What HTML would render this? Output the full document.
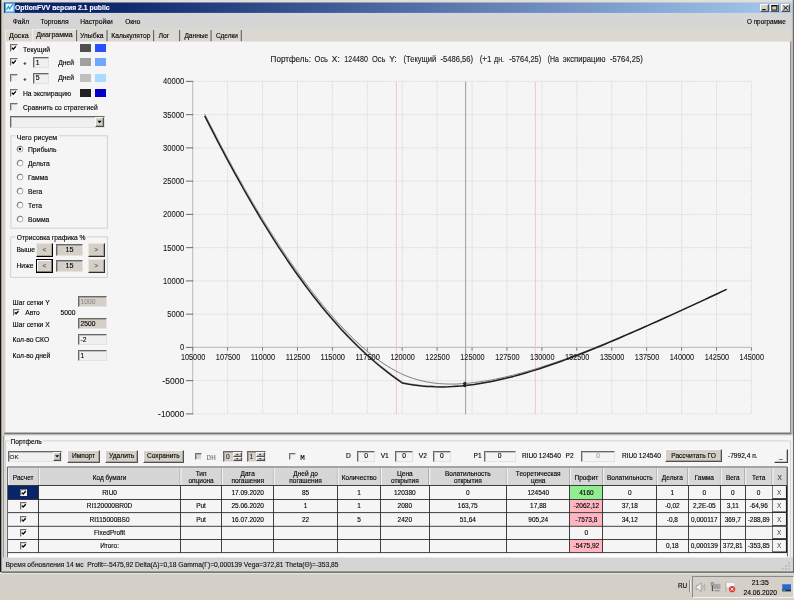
<!DOCTYPE html>
<html><head><meta charset="utf-8"><title>OptionFVV</title>
<style>
html,body{margin:0;padding:0;background:#d4d0c8;}
body{width:794px;height:600px;overflow:hidden;position:relative;font-family:"Liberation Sans",sans-serif;}
#w{position:absolute;left:0;top:0;width:794px;height:600px;will-change:transform;}
#w div,#w svg{position:absolute;box-sizing:border-box;}
.t{white-space:pre;-webkit-text-stroke:0.12px currentColor;}
.btn{background:#d4d0c8;border:1px solid;border-color:#fafafa #505050 #505050 #fafafa;box-shadow:inset -1px -1px 0 rgba(0,0,0,0.2);}
.sunk{border:1px solid;border-color:#686868 #e4e2dd #e4e2dd #686868;box-shadow:inset 1px 1px 0 rgba(0,0,0,0.2);}
.cb{background:#fff;border:1px solid;border-color:#707070 #f4f4f4 #f4f4f4 #707070;box-shadow:inset 1px 1px 0 rgba(0,0,0,0.18);}
.gb{border:1px solid #d0d0d0;}
</style></head><body><div id="w">
<svg style="left:0;top:0" width="794" height="600" viewBox="0 0 794 600"><defs><linearGradient id="tg" x1="0" x2="1" y1="0" y2="0"><stop offset="0" stop-color="#0a246a"/><stop offset="0.12" stop-color="#0a246a"/><stop offset="1" stop-color="#a6caf0"/></linearGradient></defs><rect x="0" y="0" width="794" height="600" fill="#d4d0c8"/><rect x="0" y="0" width="794" height="2.8" fill="#e2dfd9"/><rect x="0" y="0" width="1.3" height="572" fill="#141414"/><rect x="792.8" y="0" width="1.2" height="572.4" fill="#6a6a6a"/><rect x="3.9" y="2.5" width="787.6" height="10.5" fill="url(#tg)"/></svg>
<svg style="left:4px;top:2px" width="12" height="12" viewBox="0 0 12 12"><rect x="0.9" y="0.9" width="9.6" height="9.6" fill="#e6f4ff"/><rect x="1.4" y="1.4" width="8.6" height="8.6" fill="none" stroke="#3aa6f0" stroke-width="1.1"/><path d="M2.4 7.8 L4.4 4.6 L5.6 6.8 L8.8 2.4" stroke="#2b8ee0" stroke-width="1.2" fill="none"/></svg>
<div class="t" style="left:15.4px;top:3.9px;font-size:6.83px;line-height:10px;color:#fff;font-weight:bold;transform:translateY(-0.6px) rotate(0.01deg);">OptionFVV версия 2.1 public</div>
<div class="btn" style="left:760.2px;top:4px;width:9.2px;height:7.8px;"></div>
<div class="btn" style="left:769.6px;top:4px;width:9.2px;height:7.8px;"></div>
<div class="btn" style="left:781px;top:4px;width:9.2px;height:7.8px;"></div>
<svg style="left:760px;top:4px" width="31" height="8" viewBox="0 0 31 8"><rect x="2.2" y="5" width="3.4" height="1.1" fill="#000"/><rect x="11.8" y="1.6" width="5" height="4.4" fill="none" stroke="#000" stroke-width="0.8"/><rect x="11.4" y="1.2" width="5.8" height="1.2" fill="#000"/><path d="M23.4 1.8 L27.8 6 M27.8 1.8 L23.4 6" stroke="#000" stroke-width="1"/></svg>
<svg style="left:0;top:0" width="794" height="600" viewBox="0 0 794 600"><rect x="4.2" y="12.9" width="787.3" height="16.1" fill="#d6d6d6"/><rect x="4.2" y="29" width="787.3" height="12.6" fill="#dbd8d2"/><rect x="32.1" y="29" width="44.3" height="12.6" fill="#dedbd6"/><rect x="32.1" y="29" width="44.3" height="0.8" fill="#f2f0ec"/><rect x="32.1" y="29" width="0.8" height="12.6" fill="#f2f0ec"/><rect x="76.2" y="30" width="0.9" height="11.4" fill="#484848"/><rect x="106.6" y="30" width="0.9" height="11.4" fill="#484848"/><rect x="153.2" y="30" width="0.9" height="11.4" fill="#484848"/><rect x="179.2" y="30" width="0.9" height="11.4" fill="#484848"/><rect x="210.6" y="30" width="0.9" height="11.4" fill="#484848"/><rect x="240.8" y="30" width="0.9" height="11.4" fill="#484848"/><rect x="5.3" y="30.2" width="0.8" height="11.3" fill="#f2f0ec"/><rect x="5.3" y="30.2" width="26.5" height="0.8" fill="#ece9e4"/></svg>
<div class="t" style="left:12.8px;top:16.9px;font-size:6.67px;line-height:10px;color:#000;">Файл</div>
<div class="t" style="left:40.4px;top:16.9px;font-size:6.75px;line-height:10px;color:#000;">Торговля</div>
<div class="t" style="left:80.2px;top:16.9px;font-size:6.67px;line-height:10px;color:#000;">Настройки</div>
<div class="t" style="left:125.2px;top:16.9px;font-size:6.5px;line-height:10px;color:#000;">Окно</div>
<div class="t" style="left:747px;top:17px;font-size:6.34px;line-height:10px;color:#000;">О программе</div>
<div class="t" style="left:9px;top:30.9px;font-size:7.14px;line-height:10px;color:#000;">Доска</div>
<div class="t" style="left:36.3px;top:29.7px;font-size:7px;line-height:10px;color:#000;">Диаграмма</div>
<div class="t" style="left:80px;top:30.9px;font-size:6.82px;line-height:10px;color:#000;">Улыбка</div>
<div class="t" style="left:111.3px;top:30.9px;font-size:6.68px;line-height:10px;color:#000;">Калькулятор</div>
<div class="t" style="left:158.4px;top:30.9px;font-size:6.91px;line-height:10px;color:#000;">Лог</div>
<div class="t" style="left:184.4px;top:30.9px;font-size:6.62px;line-height:10px;color:#000;">Данные</div>
<div class="t" style="left:215.9px;top:30.9px;font-size:6.48px;line-height:10px;color:#000;">Сделки</div>
<svg style="left:0;top:0" width="794" height="600" viewBox="0 0 794 600"><rect x="5.4" y="41.5" width="785" height="391" fill="#f5f5f5"/><rect x="790.2" y="41.5" width="1" height="393" fill="#787878"/><rect x="4.2" y="432.5" width="787" height="2" fill="#8a8a8a"/><rect x="4.2" y="433.4" width="787" height="1.1" fill="#6e6e6e"/><rect x="4.2" y="434.5" width="788.6" height="1.2" fill="#e4e2de"/></svg>
<div class="cb" style="left:10.3px;top:44.3px;width:7.6px;height:7.6px;"></div>
<svg style="left:10.3px;top:44.3px" width="7.6" height="7.6" viewBox="0 0 8 8"><path d="M2.1 3.9 L3.5 5.4 L6.2 2.5" stroke="#000" stroke-width="1.5" fill="none"/></svg>
<div class="cb" style="left:10.3px;top:58.4px;width:7.6px;height:7.6px;"></div>
<svg style="left:10.3px;top:58.4px" width="7.6" height="7.6" viewBox="0 0 8 8"><path d="M2.1 3.9 L3.5 5.4 L6.2 2.5" stroke="#000" stroke-width="1.5" fill="none"/></svg>
<div class="cb" style="left:10.3px;top:74.3px;width:7.6px;height:7.6px;background:#f0f0f0;"></div>
<div class="cb" style="left:10.3px;top:89.2px;width:7.6px;height:7.6px;"></div>
<svg style="left:10.3px;top:89.2px" width="7.6" height="7.6" viewBox="0 0 8 8"><path d="M2.1 3.9 L3.5 5.4 L6.2 2.5" stroke="#000" stroke-width="1.5" fill="none"/></svg>
<div class="cb" style="left:10.3px;top:103.2px;width:7.6px;height:7.6px;background:#f0f0f0;"></div>
<div class="t" style="left:23px;top:44.9px;font-size:6.75px;line-height:10px;color:#000;">Текущий</div>
<div class="t" style="left:23px;top:89px;font-size:6.75px;line-height:10px;color:#000;">На экспирацию</div>
<div class="t" style="left:23px;top:102.6px;font-size:6.7px;line-height:10px;color:#000;">Сравнить со стратегией</div>
<div class="t" style="left:23.2px;top:57.9px;font-size:5.6px;line-height:10px;color:#000;font-weight:bold;">+</div>
<div class="sunk" style="left:33px;top:57px;width:16px;height:11px;background:#f0f0f0;"></div>
<div class="t" style="left:35.8px;top:57.5px;font-size:6.8px;line-height:10px;color:#000;">1</div>
<div class="t" style="left:58.2px;top:57.5px;font-size:6.75px;line-height:10px;color:#000;">Дней</div>
<div class="t" style="left:23.2px;top:73.6px;font-size:5.6px;line-height:10px;color:#000;font-weight:bold;">+</div>
<div class="sunk" style="left:33px;top:73px;width:16px;height:11px;background:#f0f0f0;"></div>
<div class="t" style="left:35.8px;top:73.2px;font-size:6.8px;line-height:10px;color:#000;">5</div>
<div class="t" style="left:58.2px;top:73.2px;font-size:6.75px;line-height:10px;color:#000;">Дней</div>
<div style="left:80.1px;top:44.3px;width:11px;height:7.7px;background:#505050;"></div>
<div style="left:94.9px;top:44.3px;width:11px;height:7.7px;background:#2850ff;"></div>
<div style="left:80.1px;top:58.4px;width:11px;height:7.7px;background:#a0a0a0;"></div>
<div style="left:94.9px;top:58.4px;width:11px;height:7.7px;background:#70a8ff;"></div>
<div style="left:80.1px;top:74.3px;width:11px;height:7.7px;background:#c0c0c0;"></div>
<div style="left:94.9px;top:74.3px;width:11px;height:7.7px;background:#a8dcff;"></div>
<div style="left:80.1px;top:89.1px;width:11px;height:7.7px;background:#202020;"></div>
<div style="left:94.9px;top:89.1px;width:11px;height:7.7px;background:#0000c8;"></div>
<div class="sunk" style="left:10.3px;top:115.8px;width:94.4px;height:11.8px;background:#f0f0f0;"></div>
<div class="btn" style="left:95px;top:117px;width:9.2px;height:10.4px;"></div>
<svg style="left:95px;top:117.4px" width="9.2" height="10" viewBox="0 0 9.2 10"><path d="M2.4 3.8 L6.8 3.8 L4.6 6.3 Z" fill="#000"/></svg>
<svg style="left:0;top:0" width="794" height="600" viewBox="0 0 794 600"><path d="M10.9 135.8 H107.4 V228.2 H10.9 Z" stroke="#cdcdcd" stroke-width="0.9" fill="none"/><rect x="15.6" y="131" width="43.4" height="9" fill="#f5f5f5"/><path d="M10.7 236.9 H107.4 V277.4 H10.7 Z" stroke="#cdcdcd" stroke-width="0.9" fill="none"/><rect x="15.6" y="232" width="71" height="9" fill="#f5f5f5"/></svg>
<div class="t" style="left:16.8px;top:132.8px;font-size:7.03px;line-height:10px;color:#000;">Чего рисуем</div>
<svg style="left:15.8px;top:144.7px" width="8" height="8" viewBox="0 0 8 8"><circle cx="4" cy="4" r="3" fill="#fdfdfd" stroke="#9a9a9a" stroke-width="0.8"/><path d="M1.8 6 A3.1 3.1 0 0 1 6 1.8" fill="none" stroke="#6a6a6a" stroke-width="0.8"/><circle cx="4" cy="4" r="1.25" fill="#000"/></svg>
<div class="t" style="left:28px;top:144.5px;font-size:6.75px;line-height:10px;color:#000;">Прибыль</div>
<svg style="left:15.8px;top:158.8px" width="8" height="8" viewBox="0 0 8 8"><circle cx="4" cy="4" r="3" fill="#fdfdfd" stroke="#9a9a9a" stroke-width="0.8"/><path d="M1.8 6 A3.1 3.1 0 0 1 6 1.8" fill="none" stroke="#6a6a6a" stroke-width="0.8"/></svg>
<div class="t" style="left:28px;top:158.6px;font-size:6.75px;line-height:10px;color:#000;">Дельта</div>
<svg style="left:15.8px;top:172.8px" width="8" height="8" viewBox="0 0 8 8"><circle cx="4" cy="4" r="3" fill="#fdfdfd" stroke="#9a9a9a" stroke-width="0.8"/><path d="M1.8 6 A3.1 3.1 0 0 1 6 1.8" fill="none" stroke="#6a6a6a" stroke-width="0.8"/></svg>
<div class="t" style="left:28px;top:172.6px;font-size:6.75px;line-height:10px;color:#000;">Гамма</div>
<svg style="left:15.8px;top:187.3px" width="8" height="8" viewBox="0 0 8 8"><circle cx="4" cy="4" r="3" fill="#fdfdfd" stroke="#9a9a9a" stroke-width="0.8"/><path d="M1.8 6 A3.1 3.1 0 0 1 6 1.8" fill="none" stroke="#6a6a6a" stroke-width="0.8"/></svg>
<div class="t" style="left:28px;top:187.1px;font-size:6.75px;line-height:10px;color:#000;">Вега</div>
<svg style="left:15.8px;top:201.3px" width="8" height="8" viewBox="0 0 8 8"><circle cx="4" cy="4" r="3" fill="#fdfdfd" stroke="#9a9a9a" stroke-width="0.8"/><path d="M1.8 6 A3.1 3.1 0 0 1 6 1.8" fill="none" stroke="#6a6a6a" stroke-width="0.8"/></svg>
<div class="t" style="left:28px;top:201.1px;font-size:6.75px;line-height:10px;color:#000;">Тета</div>
<svg style="left:15.8px;top:214.8px" width="8" height="8" viewBox="0 0 8 8"><circle cx="4" cy="4" r="3" fill="#fdfdfd" stroke="#9a9a9a" stroke-width="0.8"/><path d="M1.8 6 A3.1 3.1 0 0 1 6 1.8" fill="none" stroke="#6a6a6a" stroke-width="0.8"/></svg>
<div class="t" style="left:28px;top:214.6px;font-size:6.75px;line-height:10px;color:#000;">Вомма</div>
<div class="t" style="left:16.8px;top:232.6px;font-size:6.7px;line-height:10px;color:#000;">Отрисовка графика %</div>
<div class="t" style="left:16.5px;top:245.4px;font-size:6.75px;line-height:10px;color:#000;">Выше</div>
<div class="btn" style="left:36px;top:243px;width:17px;height:14px;border-color:#e8e6e2 #000 #000 #e8e6e2;"></div>
<div class="t" style="left:36px;top:244.8px;font-size:6.8px;line-height:10px;color:#303030;width:17px;text-align:center;-webkit-text-stroke:0;">&lt;</div>
<div class="sunk" style="left:56px;top:244px;width:27px;height:12px;background:#d4d0c8;"></div>
<div class="t" style="left:56px;top:245.2px;font-size:7.2px;line-height:10px;color:#000;width:27px;text-align:center;">15</div>
<div class="btn" style="left:87.6px;top:243px;width:17.2px;height:14px;border-color:#e8e6e2 #303030 #303030 #e8e6e2;"></div>
<div class="t" style="left:87.6px;top:244.8px;font-size:6.8px;line-height:10px;color:#303030;width:17.2px;text-align:center;-webkit-text-stroke:0;">&gt;</div>
<div class="t" style="left:16.5px;top:261.2px;font-size:6.75px;line-height:10px;color:#000;">Ниже</div>
<div class="btn" style="left:36px;top:259px;width:17px;height:14px;border:1px solid #000;box-shadow:inset -1px -1px 0 #808080,inset 1px 1px 0 #fff;"></div>
<div class="t" style="left:36px;top:260.8px;font-size:6.8px;line-height:10px;color:#303030;width:17px;text-align:center;-webkit-text-stroke:0;">&lt;</div>
<div class="sunk" style="left:56px;top:260px;width:27px;height:12px;background:#d4d0c8;"></div>
<div class="t" style="left:56px;top:261.2px;font-size:7.2px;line-height:10px;color:#000;width:27px;text-align:center;">15</div>
<div class="btn" style="left:87.6px;top:259px;width:17.2px;height:14px;border-color:#e8e6e2 #303030 #303030 #e8e6e2;"></div>
<div class="t" style="left:87.6px;top:260.8px;font-size:6.8px;line-height:10px;color:#303030;width:17.2px;text-align:center;-webkit-text-stroke:0;">&gt;</div>
<div class="t" style="left:12.6px;top:297.6px;font-size:6.7px;line-height:10px;color:#000;">Шаг сетки Y</div>
<div class="sunk" style="left:78px;top:296px;width:29px;height:11px;background:#d4d0c8;"></div>
<div class="t" style="left:80.6px;top:296.9px;font-size:6.7px;line-height:10px;color:#909090;">1000</div>
<div class="t" style="left:12.6px;top:319.6px;font-size:6.7px;line-height:10px;color:#000;">Шаг сетки X</div>
<div class="sunk" style="left:78px;top:318px;width:29px;height:11px;background:#d4d0c8;"></div>
<div class="t" style="left:80.6px;top:318.9px;font-size:6.7px;line-height:10px;color:#000;">2500</div>
<div class="t" style="left:12.6px;top:335.2px;font-size:6.7px;line-height:10px;color:#000;">Кол-во СКО</div>
<div class="sunk" style="left:78px;top:334px;width:29px;height:11px;background:#f0f0f0;"></div>
<div class="t" style="left:80.6px;top:334.9px;font-size:6.7px;line-height:10px;color:#000;">-2</div>
<div class="t" style="left:12.6px;top:351px;font-size:6.7px;line-height:10px;color:#000;">Кол-во дней</div>
<div class="sunk" style="left:78px;top:350px;width:29px;height:11px;background:#f0f0f0;"></div>
<div class="t" style="left:80.6px;top:350.9px;font-size:6.7px;line-height:10px;color:#000;">1</div>
<div class="cb" style="left:13.1px;top:308.6px;width:7px;height:7px;"></div>
<svg style="left:13.1px;top:308.6px" width="7" height="7" viewBox="0 0 8 8"><path d="M2.1 3.9 L3.5 5.4 L6.2 2.5" stroke="#000" stroke-width="1.5" fill="none"/></svg>
<div class="t" style="left:25.2px;top:307.8px;font-size:6.7px;line-height:10px;color:#000;">Авто</div>
<div class="t" style="left:60.5px;top:307.6px;font-size:6.7px;line-height:10px;color:#000;">5000</div>
<svg style="left:0;top:0" width="794" height="600" viewBox="0 0 794 600" font-family="Liberation Sans, sans-serif"><path d="M227.62 81.4 V414.2 M262.54 81.4 V414.2 M297.46 81.4 V414.2 M332.38 81.4 V414.2 M367.30 81.4 V414.2 M402.22 81.4 V414.2 M437.14 81.4 V414.2 M472.06 81.4 V414.2 M506.98 81.4 V414.2 M541.90 81.4 V414.2 M576.82 81.4 V414.2 M611.74 81.4 V414.2 M646.66 81.4 V414.2 M681.58 81.4 V414.2 M716.50 81.4 V414.2 M751.42 81.4 V414.2 M192.70 81.40 H751.4 M192.70 114.65 H751.4 M192.70 147.90 H751.4 M192.70 181.15 H751.4 M192.70 214.40 H751.4 M192.70 247.65 H751.4 M192.70 280.90 H751.4 M192.70 314.15 H751.4 M192.70 380.65 H751.4 M192.70 413.90 H751.4" stroke="#d6d6d6" stroke-width="0.8" stroke-dasharray="1.6 1" fill="none"/><path d="M192.7 81.4 V414.2 M192.7 347.4 H751.4" stroke="#c2c2c2" stroke-width="1.2" fill="none"/><path d="M186 81.40 H193.1 M186 114.65 H193.1 M186 147.90 H193.1 M186 181.15 H193.1 M186 214.40 H193.1 M186 247.65 H193.1 M186 280.90 H193.1 M186 314.15 H193.1 M186 347.40 H193.1 M186 380.65 H193.1 M186 413.90 H193.1" stroke="#5a5a5a" stroke-width="0.9" fill="none"/><path d="M192.70 347.4 V350.79999999999995 M227.62 347.4 V350.79999999999995 M262.54 347.4 V350.79999999999995 M297.46 347.4 V350.79999999999995 M332.38 347.4 V350.79999999999995 M367.30 347.4 V350.79999999999995 M402.22 347.4 V350.79999999999995 M437.14 347.4 V350.79999999999995 M472.06 347.4 V350.79999999999995 M506.98 347.4 V350.79999999999995 M541.90 347.4 V350.79999999999995 M576.82 347.4 V350.79999999999995 M611.74 347.4 V350.79999999999995 M646.66 347.4 V350.79999999999995 M681.58 347.4 V350.79999999999995 M716.50 347.4 V350.79999999999995 M751.42 347.4 V350.79999999999995" stroke="#747474" stroke-width="0.9" fill="none"/><path d="M396.4 81.4 V414.2 M535.4 81.4 V414.2" stroke="#f7c0ca" stroke-width="0.9" fill="none"/><path d="M465.6 81.4 V414.2" stroke="#9ca4b0" stroke-width="1.1" fill="none"/><path d="M204.7,114.1 L209.0,122.7 L213.4,131.1 L217.7,139.4 L222.1,147.7 L226.4,155.8 L230.8,163.8 L235.1,171.7 L239.5,179.5 L243.8,187.2 L248.2,194.8 L252.5,202.3 L256.9,209.6 L261.2,216.8 L265.6,223.9 L269.9,230.9 L274.3,237.7 L278.6,244.4 L283.0,251.0 L287.3,257.5 L291.7,263.8 L296.0,270.0 L300.4,276.0 L304.7,281.9 L309.1,287.7 L313.4,293.4 L317.8,298.9 L322.1,304.3 L326.5,309.5 L330.8,314.6 L335.2,319.6 L339.5,324.4 L343.9,329.0 L348.2,333.5 L352.6,337.9 L356.9,342.0 L361.3,346.1 L365.6,349.9 L370.0,353.5 L374.3,357.0 L378.7,360.2 L383.0,363.3 L387.4,366.1 L391.7,368.7 L396.1,371.1 L400.4,373.3 L402.2,374.2 L404.7,375.3 L409.1,377.0 L413.4,378.5 L417.8,379.8 L422.1,380.9 L426.5,381.9 L430.8,382.6 L435.2,383.2 L439.5,383.6 L443.9,383.9 L448.2,384.0 L452.6,384.1 L456.9,384.0 L461.3,383.7 L465.6,383.4 L470.0,383.0 L474.3,382.6 L478.7,382.0 L483.0,381.3 L487.4,380.6 L491.7,379.9 L496.1,379.0 L500.4,378.1 L504.8,377.1 L509.1,376.1 L513.5,375.1 L517.8,373.9 L522.2,372.8 L526.5,371.5 L530.9,370.3 L535.2,369.0 L539.6,367.6 L543.9,366.2 L548.3,364.8 L552.6,363.4 L557.0,361.9 L561.3,360.4 L565.7,358.8 L570.0,357.2 L574.4,355.6 L578.7,354.0 L583.1,352.3 L587.4,350.6 L591.8,348.9 L596.1,347.2 L600.5,345.4 L604.8,343.6 L609.1,341.9 L613.5,340.0 L617.8,338.2 L622.2,336.4 L626.5,334.5 L630.9,332.7 L635.2,330.8 L639.6,328.9 L643.9,327.0 L648.3,325.1 L652.6,323.1 L657.0,321.2 L661.3,319.3 L665.7,317.3 L670.0,315.3 L674.4,313.4 L678.7,311.4 L683.1,309.4 L687.4,307.4 L691.8,305.4 L696.1,303.4 L700.5,301.4 L704.8,299.4 L709.2,297.4 L713.5,295.4 L717.9,293.4 L722.2,291.3 L726.6,289.3" stroke="#707070" stroke-width="0.9" fill="none"/><path d="M205.6,115.4 L209.9,123.9 L214.3,132.4 L218.6,140.8 L223.0,149.1 L227.3,157.3 L231.7,165.4 L236.0,173.4 L240.4,181.2 L244.7,189.0 L249.1,196.6 L253.4,204.1 L257.8,211.5 L262.1,218.8 L266.5,225.9 L270.8,232.9 L275.2,239.8 L279.5,246.6 L283.9,253.2 L288.2,259.7 L292.6,266.0 L296.9,272.3 L301.3,278.3 L305.6,284.3 L310.0,290.1 L314.3,295.8 L318.7,301.3 L323.0,306.7 L327.4,312.0 L331.7,317.1 L336.1,322.1 L340.4,326.9 L344.8,331.7 L349.1,336.2 L353.5,340.7 L357.8,345.0 L362.2,349.2 L366.5,353.2 L370.9,357.2 L375.2,361.0 L379.6,364.7 L383.9,368.2 L388.3,371.6 L392.6,374.9 L397.0,378.1 L401.3,381.2 L403.1,382.5 L405.6,383.0 L410.0,383.8 L414.3,384.4 L418.7,385.0 L423.0,385.5 L427.4,385.9 L431.7,386.1 L436.1,386.3 L440.4,386.4 L444.8,386.4 L449.1,386.3 L453.5,386.1 L457.8,385.8 L462.2,385.5 L466.5,385.0 L470.9,384.5 L475.2,384.0 L479.6,383.3 L483.9,382.6 L488.3,381.8 L492.6,381.0 L497.0,380.1 L501.3,379.1 L505.7,378.1 L510.0,377.0 L514.4,375.9 L518.7,374.7 L523.1,373.5 L527.4,372.2 L531.8,370.9 L536.1,369.6 L540.5,368.2 L544.8,366.8 L549.2,365.3 L553.5,363.8 L557.9,362.3 L562.2,360.7 L566.6,359.1 L570.9,357.5 L575.3,355.8 L579.6,354.2 L584.0,352.5 L588.3,350.8 L592.7,349.0 L597.0,347.3 L601.4,345.5 L605.7,343.7 L610.0,341.9 L614.4,340.0 L618.7,338.2 L623.1,336.3 L627.4,334.4 L631.8,332.5 L636.1,330.6 L640.5,328.7 L644.8,326.8 L649.2,324.9 L653.5,322.9 L657.9,321.0 L662.2,319.0 L666.6,317.0 L670.9,315.1 L675.3,313.1 L679.6,311.1 L684.0,309.1 L688.3,307.1 L692.7,305.1 L697.0,303.1 L701.4,301.1 L705.7,299.1 L710.1,297.0 L714.4,295.0 L718.8,293.0 L723.1,290.9 L727.5,288.9" stroke="#b8b8b8" stroke-width="0.9" fill="none"/><path d="M204.7,115.9 L209.0,124.4 L213.4,132.9 L217.7,141.3 L222.1,149.6 L226.4,157.8 L230.8,165.9 L235.1,173.9 L239.5,181.7 L243.8,189.5 L248.2,197.1 L252.5,204.6 L256.9,212.0 L261.2,219.3 L265.6,226.4 L269.9,233.4 L274.3,240.3 L278.6,247.1 L283.0,253.7 L287.3,260.2 L291.7,266.5 L296.0,272.8 L300.4,278.8 L304.7,284.8 L309.1,290.6 L313.4,296.3 L317.8,301.8 L322.1,307.2 L326.5,312.5 L330.8,317.6 L335.2,322.6 L339.5,327.4 L343.9,332.2 L348.2,336.7 L352.6,341.2 L356.9,345.5 L361.3,349.7 L365.6,353.7 L370.0,357.7 L374.3,361.5 L378.7,365.2 L383.0,368.7 L387.4,372.1 L391.7,375.4 L396.1,378.6 L400.4,381.7 L402.2,383.0 L404.7,383.5 L409.1,384.3 L413.4,384.9 L417.8,385.5 L422.1,386.0 L426.5,386.4 L430.8,386.6 L435.2,386.8 L439.5,386.9 L443.9,386.9 L448.2,386.8 L452.6,386.6 L456.9,386.3 L461.3,386.0 L465.6,385.5 L470.0,385.0 L474.3,384.5 L478.7,383.8 L483.0,383.1 L487.4,382.3 L491.7,381.5 L496.1,380.6 L500.4,379.6 L504.8,378.6 L509.1,377.5 L513.5,376.4 L517.8,375.2 L522.2,374.0 L526.5,372.7 L530.9,371.4 L535.2,370.1 L539.6,368.7 L543.9,367.3 L548.3,365.8 L552.6,364.3 L557.0,362.8 L561.3,361.2 L565.7,359.6 L570.0,358.0 L574.4,356.3 L578.7,354.7 L583.1,353.0 L587.4,351.3 L591.8,349.5 L596.1,347.8 L600.5,346.0 L604.8,344.2 L609.1,342.4 L613.5,340.5 L617.8,338.7 L622.2,336.8 L626.5,334.9 L630.9,333.0 L635.2,331.1 L639.6,329.2 L643.9,327.3 L648.3,325.4 L652.6,323.4 L657.0,321.5 L661.3,319.5 L665.7,317.5 L670.0,315.6 L674.4,313.6 L678.7,311.6 L683.1,309.6 L687.4,307.6 L691.8,305.6 L696.1,303.6 L700.5,301.6 L704.8,299.6 L709.2,297.5 L713.5,295.5 L717.9,293.5 L722.2,291.4 L726.6,289.4" stroke="#202020" stroke-width="1.5" fill="none" stroke-linejoin="round"/><circle cx="464.8" cy="383.5" r="1.7" fill="#303030"/><circle cx="464.8" cy="385.6" r="1.7" fill="#202020"/><text x="184.2" y="84.40" font-size="8.3" text-anchor="end" textLength="21.2" lengthAdjust="spacingAndGlyphs" fill="#202020" stroke="#202020" stroke-width="0.1">40000</text><text x="184.2" y="117.65" font-size="8.3" text-anchor="end" textLength="21.2" lengthAdjust="spacingAndGlyphs" fill="#202020" stroke="#202020" stroke-width="0.1">35000</text><text x="184.2" y="150.90" font-size="8.3" text-anchor="end" textLength="21.2" lengthAdjust="spacingAndGlyphs" fill="#202020" stroke="#202020" stroke-width="0.1">30000</text><text x="184.2" y="184.15" font-size="8.3" text-anchor="end" textLength="21.2" lengthAdjust="spacingAndGlyphs" fill="#202020" stroke="#202020" stroke-width="0.1">25000</text><text x="184.2" y="217.40" font-size="8.3" text-anchor="end" textLength="21.2" lengthAdjust="spacingAndGlyphs" fill="#202020" stroke="#202020" stroke-width="0.1">20000</text><text x="184.2" y="250.65" font-size="8.3" text-anchor="end" textLength="21.2" lengthAdjust="spacingAndGlyphs" fill="#202020" stroke="#202020" stroke-width="0.1">15000</text><text x="184.2" y="283.90" font-size="8.3" text-anchor="end" textLength="21.2" lengthAdjust="spacingAndGlyphs" fill="#202020" stroke="#202020" stroke-width="0.1">10000</text><text x="184.2" y="317.15" font-size="8.3" text-anchor="end" textLength="17.0" lengthAdjust="spacingAndGlyphs" fill="#202020" stroke="#202020" stroke-width="0.1">5000</text><text x="184.2" y="350.40" font-size="8.3" text-anchor="end" textLength="4.2" lengthAdjust="spacingAndGlyphs" fill="#202020" stroke="#202020" stroke-width="0.1">0</text><text x="184.2" y="383.65" font-size="8.3" text-anchor="end" textLength="21.9" lengthAdjust="spacingAndGlyphs" fill="#202020" stroke="#202020" stroke-width="0.1">-5000</text><text x="184.2" y="416.90" font-size="8.3" text-anchor="end" textLength="26.1" lengthAdjust="spacingAndGlyphs" fill="#202020" stroke="#202020" stroke-width="0.1">-10000</text><text x="193.10" y="360" font-size="8.2" text-anchor="middle" textLength="24.4" lengthAdjust="spacingAndGlyphs" fill="#202020" stroke="#202020" stroke-width="0.1">105000</text><text x="228.02" y="360" font-size="8.2" text-anchor="middle" textLength="24.4" lengthAdjust="spacingAndGlyphs" fill="#202020" stroke="#202020" stroke-width="0.1">107500</text><text x="262.94" y="360" font-size="8.2" text-anchor="middle" textLength="24.4" lengthAdjust="spacingAndGlyphs" fill="#202020" stroke="#202020" stroke-width="0.1">110000</text><text x="297.86" y="360" font-size="8.2" text-anchor="middle" textLength="24.4" lengthAdjust="spacingAndGlyphs" fill="#202020" stroke="#202020" stroke-width="0.1">112500</text><text x="332.78" y="360" font-size="8.2" text-anchor="middle" textLength="24.4" lengthAdjust="spacingAndGlyphs" fill="#202020" stroke="#202020" stroke-width="0.1">115000</text><text x="367.70" y="360" font-size="8.2" text-anchor="middle" textLength="24.4" lengthAdjust="spacingAndGlyphs" fill="#202020" stroke="#202020" stroke-width="0.1">117500</text><text x="402.62" y="360" font-size="8.2" text-anchor="middle" textLength="24.4" lengthAdjust="spacingAndGlyphs" fill="#202020" stroke="#202020" stroke-width="0.1">120000</text><text x="437.54" y="360" font-size="8.2" text-anchor="middle" textLength="24.4" lengthAdjust="spacingAndGlyphs" fill="#202020" stroke="#202020" stroke-width="0.1">122500</text><text x="472.46" y="360" font-size="8.2" text-anchor="middle" textLength="24.4" lengthAdjust="spacingAndGlyphs" fill="#202020" stroke="#202020" stroke-width="0.1">125000</text><text x="507.38" y="360" font-size="8.2" text-anchor="middle" textLength="24.4" lengthAdjust="spacingAndGlyphs" fill="#202020" stroke="#202020" stroke-width="0.1">127500</text><text x="542.30" y="360" font-size="8.2" text-anchor="middle" textLength="24.4" lengthAdjust="spacingAndGlyphs" fill="#202020" stroke="#202020" stroke-width="0.1">130000</text><text x="577.22" y="360" font-size="8.2" text-anchor="middle" textLength="24.4" lengthAdjust="spacingAndGlyphs" fill="#202020" stroke="#202020" stroke-width="0.1">132500</text><text x="612.14" y="360" font-size="8.2" text-anchor="middle" textLength="24.4" lengthAdjust="spacingAndGlyphs" fill="#202020" stroke="#202020" stroke-width="0.1">135000</text><text x="647.06" y="360" font-size="8.2" text-anchor="middle" textLength="24.4" lengthAdjust="spacingAndGlyphs" fill="#202020" stroke="#202020" stroke-width="0.1">137500</text><text x="681.98" y="360" font-size="8.2" text-anchor="middle" textLength="24.4" lengthAdjust="spacingAndGlyphs" fill="#202020" stroke="#202020" stroke-width="0.1">140000</text><text x="716.90" y="360" font-size="8.2" text-anchor="middle" textLength="24.4" lengthAdjust="spacingAndGlyphs" fill="#202020" stroke="#202020" stroke-width="0.1">142500</text><text x="751.82" y="360" font-size="8.2" text-anchor="middle" textLength="24.4" lengthAdjust="spacingAndGlyphs" fill="#202020" stroke="#202020" stroke-width="0.1">145000</text><text x="270.6" y="61.9" font-size="8.3" textLength="40.4" lengthAdjust="spacingAndGlyphs" fill="#202020" stroke="#202020" stroke-width="0.12">Портфель:</text><text x="314.6" y="61.9" font-size="8.3" textLength="13.4" lengthAdjust="spacingAndGlyphs" fill="#202020" stroke="#202020" stroke-width="0.12">Ось</text><text x="331.8" y="61.9" font-size="8.3" textLength="8" lengthAdjust="spacingAndGlyphs" fill="#202020" stroke="#202020" stroke-width="0.12">X:</text><text x="344.3" y="61.9" font-size="8.3" textLength="23.6" lengthAdjust="spacingAndGlyphs" fill="#202020" stroke="#202020" stroke-width="0.12">124480</text><text x="372" y="61.9" font-size="8.3" textLength="13.4" lengthAdjust="spacingAndGlyphs" fill="#202020" stroke="#202020" stroke-width="0.12">Ось</text><text x="389.2" y="61.9" font-size="8.3" textLength="7.5" lengthAdjust="spacingAndGlyphs" fill="#202020" stroke="#202020" stroke-width="0.12">Y:</text><text x="403.5" y="61.9" font-size="8.3" textLength="32.8" lengthAdjust="spacingAndGlyphs" fill="#202020" stroke="#202020" stroke-width="0.12">(Текущий</text><text x="440.4" y="61.9" font-size="8.3" textLength="32.7" lengthAdjust="spacingAndGlyphs" fill="#202020" stroke="#202020" stroke-width="0.12">-5486,56)</text><text x="479.7" y="61.9" font-size="8.3" textLength="11.8" lengthAdjust="spacingAndGlyphs" fill="#202020" stroke="#202020" stroke-width="0.12">(+1</text><text x="494" y="61.9" font-size="8.3" textLength="10.1" lengthAdjust="spacingAndGlyphs" fill="#202020" stroke="#202020" stroke-width="0.12">дн.</text><text x="509.2" y="61.9" font-size="8.3" textLength="32" lengthAdjust="spacingAndGlyphs" fill="#202020" stroke="#202020" stroke-width="0.12">-5764,25)</text><text x="547.7" y="61.9" font-size="8.3" textLength="11.3" lengthAdjust="spacingAndGlyphs" fill="#202020" stroke="#202020" stroke-width="0.12">(На</text><text x="562.8" y="61.9" font-size="8.3" textLength="42.8" lengthAdjust="spacingAndGlyphs" fill="#202020" stroke="#202020" stroke-width="0.12">экспирацию</text><text x="610" y="61.9" font-size="8.3" textLength="32.7" lengthAdjust="spacingAndGlyphs" fill="#202020" stroke="#202020" stroke-width="0.12">-5764,25)</text></svg>
<svg style="left:0;top:0" width="794" height="600" viewBox="0 0 794 600"><rect x="3.3" y="435.6" width="789.5" height="122" fill="#f5f5f5"/><rect x="3.3" y="435.6" width="0.9" height="122" fill="#757575"/><path d="M5.5 557.6 V440.9 H790.6 V557.6" stroke="#cfcfcf" stroke-width="0.9" fill="none"/><rect x="9.6" y="436.5" width="33" height="9" fill="#f5f5f5"/></svg>
<div class="t" style="left:10.6px;top:437.1px;font-size:6.6px;line-height:10px;color:#000;">Портфель</div>
<div class="sunk" style="left:7.6px;top:451px;width:54.6px;height:11px;background:#f0f0f0;"></div>
<div class="t" style="left:9.6px;top:451.7px;font-size:6.2px;line-height:10px;color:#202020;">OK</div>
<div class="btn" style="left:52.6px;top:452.4px;width:8.4px;height:8.4px;"></div>
<svg style="left:52.6px;top:452.4px" width="8.4" height="8.4" viewBox="0 0 8.4 8.4"><path d="M2.1 3.2 L6.3 3.2 L4.2 5.6 Z" fill="#000"/></svg>
<div class="btn" style="left:67.3px;top:450px;width:32.6px;height:12.6px;"></div>
<div class="t" style="left:67.3px;top:451.2px;font-size:6.6px;line-height:10px;color:#000;width:32.6px;text-align:center;">Импорт</div>
<div class="btn" style="left:105.4px;top:450px;width:32.6px;height:12.6px;"></div>
<div class="t" style="left:105.4px;top:451.2px;font-size:6.6px;line-height:10px;color:#000;width:32.6px;text-align:center;">Удалить</div>
<div class="btn" style="left:142.9px;top:450px;width:41px;height:12.6px;"></div>
<div class="t" style="left:142.9px;top:451.2px;font-size:6.6px;line-height:10px;color:#000;width:41px;text-align:center;">Сохранить</div>
<div class="cb" style="left:194.6px;top:453px;width:7px;height:7px;background:#d8d5ce;"></div>
<div class="t" style="left:206.6px;top:453px;font-size:7.6px;line-height:10px;color:#7a7a7a;font-family:'Liberation Mono',monospace;">DH</div>
<div class="sunk" style="left:223.4px;top:451px;width:19.4px;height:11.4px;background:#d4d0c8;"></div>
<div class="t" style="left:226px;top:452px;font-size:6.7px;line-height:10px;color:#303030;">0</div>
<div class="btn" style="left:233px;top:452.4px;width:8.6px;height:4.6px;background:#dcd9d2;"></div>
<div class="btn" style="left:233px;top:456.8px;width:8.6px;height:4.6px;background:#dcd9d2;"></div>
<svg style="left:233px;top:452.4px" width="8.6" height="9" viewBox="0 0 8.6 9"><path d="M3 2.9 L5.6 2.9 L4.3 1.6 Z M3 6 L5.6 6 L4.3 7.3 Z" fill="#303030"/></svg>
<div class="sunk" style="left:246.8px;top:451px;width:19.4px;height:11.4px;background:#d4d0c8;"></div>
<div class="t" style="left:249.4px;top:452px;font-size:6.7px;line-height:10px;color:#303030;">1</div>
<div class="btn" style="left:256.4px;top:452.4px;width:8.6px;height:4.6px;background:#dcd9d2;"></div>
<div class="btn" style="left:256.4px;top:456.8px;width:8.6px;height:4.6px;background:#dcd9d2;"></div>
<svg style="left:256.4px;top:452.4px" width="8.6" height="9" viewBox="0 0 8.6 9"><path d="M3 2.9 L5.6 2.9 L4.3 1.6 Z M3 6 L5.6 6 L4.3 7.3 Z" fill="#303030"/></svg>
<div class="cb" style="left:288.6px;top:453px;width:7px;height:7px;background:#f2f2f2;"></div>
<div class="t" style="left:300.2px;top:453px;font-size:7.6px;line-height:10px;color:#000;font-family:'Liberation Mono',monospace;">M</div>
<div class="t" style="left:346px;top:450.8px;font-size:6.6px;line-height:10px;color:#000;">D</div>
<div class="sunk" style="left:357px;top:451px;width:18px;height:10.6px;background:#f4f4f4;"></div>
<div class="t" style="left:357px;top:451.1px;font-size:6.7px;line-height:10px;color:#000;width:18px;text-align:center;">0</div>
<div class="t" style="left:380.7px;top:450.8px;font-size:6.6px;line-height:10px;color:#000;">V1</div>
<div class="sunk" style="left:395px;top:451px;width:18px;height:10.6px;background:#f4f4f4;"></div>
<div class="t" style="left:395px;top:451.1px;font-size:6.7px;line-height:10px;color:#000;width:18px;text-align:center;">0</div>
<div class="t" style="left:418.8px;top:450.8px;font-size:6.6px;line-height:10px;color:#000;">V2</div>
<div class="sunk" style="left:432.8px;top:451px;width:18px;height:10.6px;background:#f4f4f4;"></div>
<div class="t" style="left:432.8px;top:451.1px;font-size:6.7px;line-height:10px;color:#000;width:18px;text-align:center;">0</div>
<div class="t" style="left:473.6px;top:450.8px;font-size:6.6px;line-height:10px;color:#000;">P1</div>
<div class="sunk" style="left:483.5px;top:451px;width:32.4px;height:10.6px;background:#f4f4f4;"></div>
<div class="t" style="left:483.5px;top:451.1px;font-size:6.7px;line-height:10px;color:#000;width:32.4px;text-align:center;">0</div>
<div class="t" style="left:522px;top:450.8px;font-size:6.6px;line-height:10px;color:#000;">RIU0 124540</div>
<div class="t" style="left:565.5px;top:450.8px;font-size:6.6px;line-height:10px;color:#000;">P2</div>
<div class="sunk" style="left:581px;top:451px;width:34px;height:10.6px;background:#f4f4f4;"></div>
<div class="t" style="left:581px;top:451.1px;font-size:6.7px;line-height:10px;color:#a0a0a0;width:34px;text-align:center;">0</div>
<div class="t" style="left:622px;top:450.8px;font-size:6.6px;line-height:10px;color:#000;">RIU0 124540</div>
<div class="btn" style="left:665px;top:448.7px;width:57px;height:13.8px;"></div>
<div class="t" style="left:665px;top:451px;font-size:6.6px;line-height:10px;color:#000;width:57px;text-align:center;">Рассчитать ГО</div>
<div class="t" style="left:728px;top:451.2px;font-size:6.6px;line-height:10px;color:#000;">-7992,4 п.</div>
<div class="btn" style="left:774px;top:448.7px;width:13.6px;height:14.2px;background:#f4f4f4;border-color:#f8f8f8 #404040 #404040 #f8f8f8;"></div>
<div class="t" style="left:774px;top:451.2px;font-size:6.6px;line-height:10px;color:#000;width:13.6px;text-align:center;">_</div>
<svg style="left:0;top:0" width="794" height="600" viewBox="0 0 794 600"><rect x="7.2" y="466.8" width="780.6" height="90.4" fill="#f5f5f5"/><rect x="7.2" y="553" width="780.6" height="4.6" fill="#fdfdfd"/><rect x="7.6" y="467.4" width="31.2" height="18.1" fill="#d6d6d6"/><rect x="7.9" y="467.4" width="0.9" height="18.1" fill="#f4f4f4"/><rect x="38.1" y="467.4" width="0.8" height="18.1" fill="#a2a2a2"/><rect x="38.8" y="467.4" width="141.5" height="18.1" fill="#d6d6d6"/><rect x="39.1" y="467.4" width="0.9" height="18.1" fill="#f4f4f4"/><rect x="179.6" y="467.4" width="0.8" height="18.1" fill="#a2a2a2"/><rect x="180.3" y="467.4" width="41.5" height="18.1" fill="#d6d6d6"/><rect x="180.6" y="467.4" width="0.9" height="18.1" fill="#f4f4f4"/><rect x="221.1" y="467.4" width="0.8" height="18.1" fill="#a2a2a2"/><rect x="221.8" y="467.4" width="51.8" height="18.1" fill="#d6d6d6"/><rect x="222.1" y="467.4" width="0.9" height="18.1" fill="#f4f4f4"/><rect x="272.9" y="467.4" width="0.8" height="18.1" fill="#a2a2a2"/><rect x="273.6" y="467.4" width="64" height="18.1" fill="#d6d6d6"/><rect x="273.9" y="467.4" width="0.9" height="18.1" fill="#f4f4f4"/><rect x="336.9" y="467.4" width="0.8" height="18.1" fill="#a2a2a2"/><rect x="337.6" y="467.4" width="43.1" height="18.1" fill="#d6d6d6"/><rect x="337.9" y="467.4" width="0.9" height="18.1" fill="#f4f4f4"/><rect x="380" y="467.4" width="0.8" height="18.1" fill="#a2a2a2"/><rect x="380.7" y="467.4" width="48.3" height="18.1" fill="#d6d6d6"/><rect x="381" y="467.4" width="0.9" height="18.1" fill="#f4f4f4"/><rect x="428.3" y="467.4" width="0.8" height="18.1" fill="#a2a2a2"/><rect x="429" y="467.4" width="77.6" height="18.1" fill="#d6d6d6"/><rect x="429.3" y="467.4" width="0.9" height="18.1" fill="#f4f4f4"/><rect x="505.9" y="467.4" width="0.8" height="18.1" fill="#a2a2a2"/><rect x="506.6" y="467.4" width="63.3" height="18.1" fill="#d6d6d6"/><rect x="506.9" y="467.4" width="0.9" height="18.1" fill="#f4f4f4"/><rect x="569.2" y="467.4" width="0.8" height="18.1" fill="#a2a2a2"/><rect x="569.9" y="467.4" width="33" height="18.1" fill="#d6d6d6"/><rect x="570.2" y="467.4" width="0.9" height="18.1" fill="#f4f4f4"/><rect x="602.2" y="467.4" width="0.8" height="18.1" fill="#a2a2a2"/><rect x="602.9" y="467.4" width="53.8" height="18.1" fill="#d6d6d6"/><rect x="603.2" y="467.4" width="0.9" height="18.1" fill="#f4f4f4"/><rect x="656" y="467.4" width="0.8" height="18.1" fill="#a2a2a2"/><rect x="656.7" y="467.4" width="31.3" height="18.1" fill="#d6d6d6"/><rect x="657" y="467.4" width="0.9" height="18.1" fill="#f4f4f4"/><rect x="687.3" y="467.4" width="0.8" height="18.1" fill="#a2a2a2"/><rect x="688" y="467.4" width="32.6" height="18.1" fill="#d6d6d6"/><rect x="688.3" y="467.4" width="0.9" height="18.1" fill="#f4f4f4"/><rect x="719.9" y="467.4" width="0.8" height="18.1" fill="#a2a2a2"/><rect x="720.6" y="467.4" width="24.4" height="18.1" fill="#d6d6d6"/><rect x="720.9" y="467.4" width="0.9" height="18.1" fill="#f4f4f4"/><rect x="744.3" y="467.4" width="0.8" height="18.1" fill="#a2a2a2"/><rect x="745" y="467.4" width="27.3" height="18.1" fill="#d6d6d6"/><rect x="745.3" y="467.4" width="0.9" height="18.1" fill="#f4f4f4"/><rect x="771.6" y="467.4" width="0.8" height="18.1" fill="#a2a2a2"/><rect x="772.3" y="467.4" width="14.5" height="18.1" fill="#d6d6d6"/><rect x="772.6" y="467.4" width="0.9" height="18.1" fill="#f4f4f4"/><rect x="786.1" y="467.4" width="0.8" height="18.1" fill="#a2a2a2"/><rect x="7.6" y="467.4" width="779.2" height="0.8" fill="#ececec"/><rect x="7.6" y="485.5" width="31.2" height="14" fill="#0a246a"/><rect x="569.9" y="485.5" width="33" height="14" fill="#90ee90"/><rect x="569.9" y="499.5" width="33" height="13.1" fill="#ffb6c1"/><rect x="569.9" y="512.6" width="33" height="13.7" fill="#ffb6c1"/><rect x="569.9" y="539.5" width="33" height="13.1" fill="#ffb6c1"/><path d="M7.6 485.5 H787 M7.6 499.5 H787 M7.6 512.6 H787 M7.6 526.3 H787 M7.6 539.5 H787 M7.6 552.6 H787 M38.5 485.5 V552.8 M180.5 485.5 V552.8 M221.5 485.5 V552.8 M273.5 485.5 V552.8 M337.5 485.5 V552.8 M380.5 485.5 V552.8 M429.5 485.5 V552.8 M506.5 485.5 V552.8 M569.5 485.5 V552.8 M602.5 485.5 V552.8 M656.5 485.5 V552.8 M688.5 485.5 V552.8 M720.5 485.5 V552.8 M745.5 485.5 V552.8 M772.5 485.5 V552.8" stroke="#2c2c2c" stroke-width="0.9" fill="none"/><rect x="772.7" y="486" width="14" height="13.1" fill="#f4f4f4"/><path d="M772.8 499.0 H786.6 V485.9" stroke="#181818" stroke-width="1.3" fill="none"/><rect x="772.7" y="500" width="14" height="12.2" fill="#f4f4f4"/><path d="M772.8 512.1 H786.6 V499.9" stroke="#181818" stroke-width="1.3" fill="none"/><rect x="772.7" y="513.1" width="14" height="12.8" fill="#f4f4f4"/><path d="M772.8 525.8 H786.6 V513.0" stroke="#181818" stroke-width="1.3" fill="none"/><rect x="772.7" y="526.8" width="14" height="12.3" fill="#f4f4f4"/><path d="M772.8 539.0 H786.6 V526.6999999999999" stroke="#181818" stroke-width="1.3" fill="none"/><rect x="772.7" y="540" width="14" height="12.2" fill="#f4f4f4"/><path d="M772.8 552.1 H786.6 V539.9" stroke="#181818" stroke-width="1.3" fill="none"/><path d="M7.4 557.4 V467 H787.4 V556.4" stroke="#4a4a4a" stroke-width="0.9" fill="none"/></svg>
<div class="t" style="left:7.6px;top:474px;width:31.2px;text-align:center;font-size:6.5px;line-height:7.4px;color:#000;">Расчет</div>
<div class="t" style="left:38.8px;top:474px;width:141.5px;text-align:center;font-size:6.5px;line-height:7.4px;color:#000;">Код бумаги</div>
<div class="t" style="left:180.3px;top:470px;width:41.5px;text-align:center;font-size:6.5px;line-height:7.4px;color:#000;">Тип<br>опциона</div>
<div class="t" style="left:221.8px;top:470px;width:51.8px;text-align:center;font-size:6.5px;line-height:7.4px;color:#000;">Дата<br>погашения</div>
<div class="t" style="left:273.6px;top:470px;width:64px;text-align:center;font-size:6.5px;line-height:7.4px;color:#000;">Дней до<br>погашения</div>
<div class="t" style="left:337.6px;top:474px;width:43.1px;text-align:center;font-size:6.5px;line-height:7.4px;color:#000;">Количество</div>
<div class="t" style="left:380.7px;top:470px;width:48.3px;text-align:center;font-size:6.5px;line-height:7.4px;color:#000;">Цена<br>открытия</div>
<div class="t" style="left:429px;top:470px;width:77.6px;text-align:center;font-size:6.5px;line-height:7.4px;color:#000;">Волатильность<br>открытия</div>
<div class="t" style="left:506.6px;top:470px;width:63.3px;text-align:center;font-size:6.5px;line-height:7.4px;color:#000;">Теоретическая<br>цена</div>
<div class="t" style="left:569.9px;top:474px;width:33px;text-align:center;font-size:6.5px;line-height:7.4px;color:#000;">Профит</div>
<div class="t" style="left:602.9px;top:474px;width:53.8px;text-align:center;font-size:6.5px;line-height:7.4px;color:#000;">Волатильность</div>
<div class="t" style="left:656.7px;top:474px;width:31.3px;text-align:center;font-size:6.5px;line-height:7.4px;color:#000;">Дельта</div>
<div class="t" style="left:688px;top:474px;width:32.6px;text-align:center;font-size:6.5px;line-height:7.4px;color:#000;">Гамма</div>
<div class="t" style="left:720.6px;top:474px;width:24.4px;text-align:center;font-size:6.5px;line-height:7.4px;color:#000;">Вега</div>
<div class="t" style="left:745px;top:474px;width:27.3px;text-align:center;font-size:6.5px;line-height:7.4px;color:#000;">Тета</div>
<div class="t" style="left:772.3px;top:474px;width:14.5px;text-align:center;font-size:6.5px;line-height:7.4px;color:#444;">X</div>
<div class="cb" style="left:19.8px;top:488.8px;width:7.4px;height:7.4px;"></div>
<svg style="left:19.8px;top:488.8px" width="7.4" height="7.4" viewBox="0 0 8 8"><path d="M2.1 3.9 L3.5 5.4 L6.2 2.5" stroke="#000" stroke-width="1.5" fill="none"/></svg>
<div class="t" style="left:38.8px;top:487.8px;font-size:6.5px;line-height:10px;color:#000;width:141.5px;text-align:center;">RIU0</div>
<div class="t" style="left:221.8px;top:487.8px;font-size:6.5px;line-height:10px;color:#000;width:51.8px;text-align:center;">17.09.2020</div>
<div class="t" style="left:273.6px;top:487.8px;font-size:6.5px;line-height:10px;color:#000;width:64px;text-align:center;">85</div>
<div class="t" style="left:337.6px;top:487.8px;font-size:6.5px;line-height:10px;color:#000;width:43.1px;text-align:center;">1</div>
<div class="t" style="left:380.7px;top:487.8px;font-size:6.5px;line-height:10px;color:#000;width:48.3px;text-align:center;">120380</div>
<div class="t" style="left:429px;top:487.8px;font-size:6.5px;line-height:10px;color:#000;width:77.6px;text-align:center;">0</div>
<div class="t" style="left:506.6px;top:487.8px;font-size:6.5px;line-height:10px;color:#000;width:63.3px;text-align:center;">124540</div>
<div class="t" style="left:569.9px;top:487.8px;font-size:6.5px;line-height:10px;color:#000;width:33px;text-align:center;">4160</div>
<div class="t" style="left:602.9px;top:487.8px;font-size:6.5px;line-height:10px;color:#000;width:53.8px;text-align:center;">0</div>
<div class="t" style="left:656.7px;top:487.8px;font-size:6.5px;line-height:10px;color:#000;width:31.3px;text-align:center;">1</div>
<div class="t" style="left:688px;top:487.8px;font-size:6.5px;line-height:10px;color:#000;width:32.6px;text-align:center;">0</div>
<div class="t" style="left:720.6px;top:487.8px;font-size:6.5px;line-height:10px;color:#000;width:24.4px;text-align:center;">0</div>
<div class="t" style="left:745px;top:487.8px;font-size:6.5px;line-height:10px;color:#000;width:27.3px;text-align:center;">0</div>
<div class="t" style="left:772px;top:487.8px;font-size:6.5px;line-height:10px;color:#404040;width:14.5px;text-align:center;-webkit-text-stroke:0;">X</div>
<div class="cb" style="left:19.8px;top:502.35px;width:7.4px;height:7.4px;"></div>
<svg style="left:19.8px;top:502.35px" width="7.4" height="7.4" viewBox="0 0 8 8"><path d="M2.1 3.9 L3.5 5.4 L6.2 2.5" stroke="#000" stroke-width="1.5" fill="none"/></svg>
<div class="t" style="left:38.8px;top:501.35px;font-size:6.5px;line-height:10px;color:#000;width:141.5px;text-align:center;">RI120000BR0D</div>
<div class="t" style="left:180.3px;top:501.35px;font-size:6.5px;line-height:10px;color:#000;width:41.5px;text-align:center;">Put</div>
<div class="t" style="left:221.8px;top:501.35px;font-size:6.5px;line-height:10px;color:#000;width:51.8px;text-align:center;">25.06.2020</div>
<div class="t" style="left:273.6px;top:501.35px;font-size:6.5px;line-height:10px;color:#000;width:64px;text-align:center;">1</div>
<div class="t" style="left:337.6px;top:501.35px;font-size:6.5px;line-height:10px;color:#000;width:43.1px;text-align:center;">1</div>
<div class="t" style="left:380.7px;top:501.35px;font-size:6.5px;line-height:10px;color:#000;width:48.3px;text-align:center;">2080</div>
<div class="t" style="left:429px;top:501.35px;font-size:6.5px;line-height:10px;color:#000;width:77.6px;text-align:center;">163,75</div>
<div class="t" style="left:506.6px;top:501.35px;font-size:6.5px;line-height:10px;color:#000;width:63.3px;text-align:center;">17,88</div>
<div class="t" style="left:569.9px;top:501.35px;font-size:6.5px;line-height:10px;color:#000;width:33px;text-align:center;">-2062,12</div>
<div class="t" style="left:602.9px;top:501.35px;font-size:6.5px;line-height:10px;color:#000;width:53.8px;text-align:center;">37,18</div>
<div class="t" style="left:656.7px;top:501.35px;font-size:6.5px;line-height:10px;color:#000;width:31.3px;text-align:center;">-0,02</div>
<div class="t" style="left:688px;top:501.35px;font-size:6.5px;line-height:10px;color:#000;width:32.6px;text-align:center;">2,2E-05</div>
<div class="t" style="left:720.6px;top:501.35px;font-size:6.5px;line-height:10px;color:#000;width:24.4px;text-align:center;">3,11</div>
<div class="t" style="left:745px;top:501.35px;font-size:6.5px;line-height:10px;color:#000;width:27.3px;text-align:center;">-64,96</div>
<div class="t" style="left:772px;top:501.35px;font-size:6.5px;line-height:10px;color:#404040;width:14.5px;text-align:center;-webkit-text-stroke:0;">X</div>
<div class="cb" style="left:19.8px;top:515.75px;width:7.4px;height:7.4px;"></div>
<svg style="left:19.8px;top:515.75px" width="7.4" height="7.4" viewBox="0 0 8 8"><path d="M2.1 3.9 L3.5 5.4 L6.2 2.5" stroke="#000" stroke-width="1.5" fill="none"/></svg>
<div class="t" style="left:38.8px;top:514.75px;font-size:6.5px;line-height:10px;color:#000;width:141.5px;text-align:center;">RI115000BS0</div>
<div class="t" style="left:180.3px;top:514.75px;font-size:6.5px;line-height:10px;color:#000;width:41.5px;text-align:center;">Put</div>
<div class="t" style="left:221.8px;top:514.75px;font-size:6.5px;line-height:10px;color:#000;width:51.8px;text-align:center;">16.07.2020</div>
<div class="t" style="left:273.6px;top:514.75px;font-size:6.5px;line-height:10px;color:#000;width:64px;text-align:center;">22</div>
<div class="t" style="left:337.6px;top:514.75px;font-size:6.5px;line-height:10px;color:#000;width:43.1px;text-align:center;">5</div>
<div class="t" style="left:380.7px;top:514.75px;font-size:6.5px;line-height:10px;color:#000;width:48.3px;text-align:center;">2420</div>
<div class="t" style="left:429px;top:514.75px;font-size:6.5px;line-height:10px;color:#000;width:77.6px;text-align:center;">51,64</div>
<div class="t" style="left:506.6px;top:514.75px;font-size:6.5px;line-height:10px;color:#000;width:63.3px;text-align:center;">905,24</div>
<div class="t" style="left:569.9px;top:514.75px;font-size:6.5px;line-height:10px;color:#000;width:33px;text-align:center;">-7573,8</div>
<div class="t" style="left:602.9px;top:514.75px;font-size:6.5px;line-height:10px;color:#000;width:53.8px;text-align:center;">34,12</div>
<div class="t" style="left:656.7px;top:514.75px;font-size:6.5px;line-height:10px;color:#000;width:31.3px;text-align:center;">-0,8</div>
<div class="t" style="left:688px;top:514.75px;font-size:6.5px;line-height:10px;color:#000;width:32.6px;text-align:center;">0,000117</div>
<div class="t" style="left:720.6px;top:514.75px;font-size:6.5px;line-height:10px;color:#000;width:24.4px;text-align:center;">369,7</div>
<div class="t" style="left:745px;top:514.75px;font-size:6.5px;line-height:10px;color:#000;width:27.3px;text-align:center;">-288,89</div>
<div class="t" style="left:772px;top:514.75px;font-size:6.5px;line-height:10px;color:#404040;width:14.5px;text-align:center;-webkit-text-stroke:0;">X</div>
<div class="cb" style="left:19.8px;top:529.2px;width:7.4px;height:7.4px;"></div>
<svg style="left:19.8px;top:529.2px" width="7.4" height="7.4" viewBox="0 0 8 8"><path d="M2.1 3.9 L3.5 5.4 L6.2 2.5" stroke="#000" stroke-width="1.5" fill="none"/></svg>
<div class="t" style="left:38.8px;top:528.2px;font-size:6.5px;line-height:10px;color:#000;width:141.5px;text-align:center;">FixedProfit</div>
<div class="t" style="left:569.9px;top:528.2px;font-size:6.5px;line-height:10px;color:#000;width:33px;text-align:center;">0</div>
<div class="t" style="left:772px;top:528.2px;font-size:6.5px;line-height:10px;color:#404040;width:14.5px;text-align:center;-webkit-text-stroke:0;">X</div>
<div class="cb" style="left:19.8px;top:542.35px;width:7.4px;height:7.4px;"></div>
<svg style="left:19.8px;top:542.35px" width="7.4" height="7.4" viewBox="0 0 8 8"><path d="M2.1 3.9 L3.5 5.4 L6.2 2.5" stroke="#000" stroke-width="1.5" fill="none"/></svg>
<div class="t" style="left:38.8px;top:541.35px;font-size:6.5px;line-height:10px;color:#000;width:141.5px;text-align:center;">Итого:</div>
<div class="t" style="left:569.9px;top:541.35px;font-size:6.5px;line-height:10px;color:#000;width:33px;text-align:center;">-5475,92</div>
<div class="t" style="left:656.7px;top:541.35px;font-size:6.5px;line-height:10px;color:#000;width:31.3px;text-align:center;">0,18</div>
<div class="t" style="left:688px;top:541.35px;font-size:6.5px;line-height:10px;color:#000;width:32.6px;text-align:center;">0,000139</div>
<div class="t" style="left:720.6px;top:541.35px;font-size:6.5px;line-height:10px;color:#000;width:24.4px;text-align:center;">372,81</div>
<div class="t" style="left:745px;top:541.35px;font-size:6.5px;line-height:10px;color:#000;width:27.3px;text-align:center;">-353,85</div>
<div class="t" style="left:772px;top:541.35px;font-size:6.5px;line-height:10px;color:#404040;width:14.5px;text-align:center;-webkit-text-stroke:0;">X</div>
<svg style="left:0;top:0" width="794" height="600" viewBox="0 0 794 600"><rect x="2.3" y="557.7" width="790.5" height="14" fill="#d5d5d5"/></svg>
<div class="t" style="left:5.4px;top:559.6px;font-size:6.7px;line-height:10px;color:#101010;">Время обновления 14 мс  Profit=-5475,92 Delta(Δ)=0,18 Gamma(Γ)=0,000139 Vega=372,81 Theta(Θ)=-353,85</div>
<svg style="left:781px;top:561px" width="9" height="9" viewBox="0 0 9 9"><path d="M8 1.5v1M8 4.5v1M8 7.5v1M5 4.5v1M5 7.5v1M2 7.5v1" stroke="#909090" stroke-width="1.2"/></svg>
<svg style="left:0;top:0" width="794" height="600" viewBox="0 0 794 600"><rect x="0" y="572.4" width="794" height="27.6" fill="#d4d0c8"/><rect x="1.4" y="571.5" width="792.6" height="1.4" fill="#5c5c5c"/><rect x="0" y="572.9" width="794" height="1.2" fill="#e6e4df"/></svg>
<div class="t" style="left:678px;top:581.4px;font-size:6.4px;line-height:10px;color:#000;">RU</div>
<div style="left:689.2px;top:579.8px;width:1px;height:12.4px;background:#8c8a86;"></div>
<div style="left:690.2px;top:579.8px;width:1px;height:12.4px;background:#f0eeea;"></div>
<div style="left:692px;top:576px;width:102px;height:22px;border:1px solid;border-color:#8c8a86 #f4f2ee #f4f2ee #8c8a86;"></div>
<svg style="left:694px;top:580px" width="44" height="14" viewBox="0 0 44 14"><path d="M2.2 5.4h2.2l2.8-2.6v9l-2.8-2.6h-2.2z" fill="#f0f0f0" stroke="#8a8a8a" stroke-width="0.7"/><path d="M8.6 5q1.3 2.3 0 4.6M10.2 3.8q2 3.5 0 7" fill="none" stroke="#a0a0a0" stroke-width="0.8"/><rect x="19" y="3.2" width="8" height="6.4" rx="0.6" fill="#a4a4a4" stroke="#d8d8d8" stroke-width="0.9"/><rect x="20.6" y="10" width="5" height="1.3" fill="#909090"/><rect x="17" y="2.6" width="2.6" height="3" fill="#b0b0b0" stroke="#707070" stroke-width="0.5"/><rect x="17.8" y="5.6" width="1.3" height="5.6" fill="#505050"/><rect x="31" y="2.4" width="1.4" height="9.4" fill="#b8b8b8"/><rect x="32.2" y="2.8" width="8.4" height="4.8" fill="#f8f8f8" stroke="#c0c0c0" stroke-width="0.5"/><circle cx="38.1" cy="9.2" r="3.1" fill="#e03838"/><path d="M36.6 7.7l3 3m0-3l-3 3" stroke="#fff" stroke-width="1"/></svg>
<div class="t" style="left:738.2px;top:578.2px;font-size:6.8px;line-height:10px;color:#000;width:44px;text-align:center;">21:35</div>
<div class="t" style="left:738.2px;top:587.6px;font-size:6.7px;line-height:10px;color:#000;width:44px;text-align:center;">24.06.2020</div>
<svg style="left:782px;top:583.6px" width="9.4" height="8" viewBox="0 0 9.4 8"><rect x="0.3" y="0.3" width="8.8" height="5.6" fill="#2a68d0" stroke="#4a80d8" stroke-width="0.5"/><rect x="0.3" y="5.6" width="8.8" height="1.8" fill="#1a2a50"/><rect x="1.2" y="6" width="2" height="0.9" fill="#60c040"/></svg>
</div></body></html>
